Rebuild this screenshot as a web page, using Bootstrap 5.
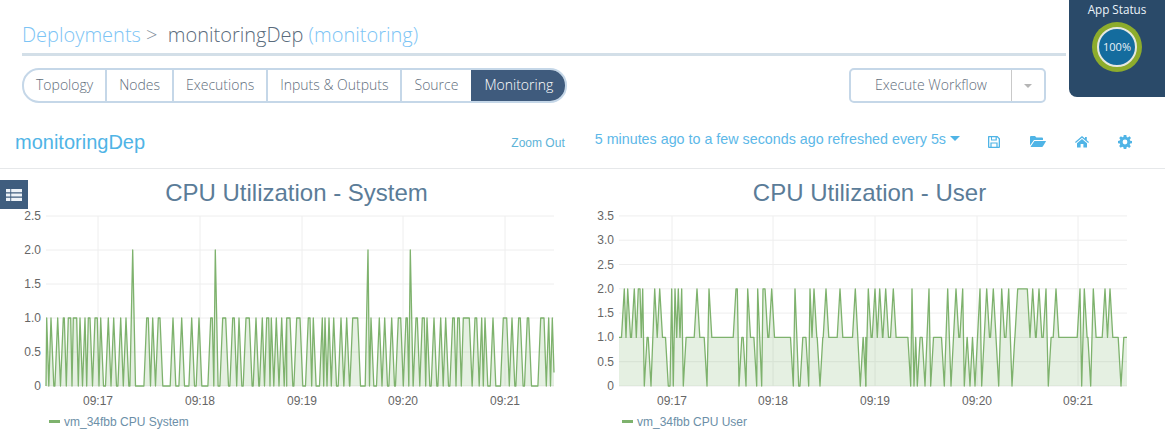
<!DOCTYPE html>
<html lang="en">
<head>
    <meta charset="UTF-8">
    <meta name="viewport" content="width=device-width, initial-scale=1.0">
    <title>monitoringDep</title>
    <link rel="stylesheet" href="https://cdn.jsdelivr.net/npm/bootstrap@5.3.0/dist/css/bootstrap.min.css">
    <style>
        body {
            background: #fff;
            font-family: "Open Sans", "Liberation Sans", sans-serif;
            font-weight: 300;
            height: 436px;
            overflow: hidden;
            position: relative;
        }
        .page-head {
            margin: 0 99px 0 22px;
            height: 56px;
            padding-top: 20px;
            border-bottom: 3px solid #d3dfe8;
            font-size: 20px;
            line-height: 30px;
            color: #7cc4f5;
            white-space: nowrap;
        }
        .page-head .sep { color: #7c8a98; margin-right: 5px; }
        .page-head .dep-name { color: #5a6b7c; }
        .tab-bar {
            margin: 12px 119px 0 22px;
            height: 35px;
        }
        .tab-group {
            border: 2px solid #c5d7e8;
            border-radius: 17px;
            overflow: hidden;
            height: 35px;
        }
        .tab-item {
            font-size: 14px;
            line-height: 29px;
            padding: 0 12px;
            color: #5f6e7c;
            border-left: 2px solid #c5d7e8;
        }
        .tab-item:first-child { border-left: 0; }
        .tab-item.on { background: #3f5b7d; color: #fff; border-left: 0; padding: 0 12px 0 13px; }
        .tab-item.wide { padding: 0 11px 0 12px; }
        .tab-item.tail { padding: 0 13px; }
        .exec-group {
            width: 197px;
            height: 35px;
            border: 2px solid #c5d7e8;
            border-radius: 5px;
            font-size: 14px;
            color: #5f6e7c;
        }
        .exec-main { width: 161px; line-height: 29px; height: 31px; text-align: center; border-right: 1px solid #c9c9c9; }
        .exec-caret {
            border-top: 4px solid #b5b5b5;
            border-left: 4px solid transparent;
            border-right: 4px solid transparent;
        }
        .status-box {
            position: absolute;
            top: 0;
            right: 0;
            width: 96px;
            height: 97px;
            background: #2a4a69;
            border-bottom-left-radius: 8px;
            color: #eaf3fa;
            font-size: 11.7px;
            font-weight: 400;
            text-align: center;
            line-height: 18px;
        }
        .status-ring {
            width: 50px;
            height: 50px;
            margin: 4px auto 0;
            border-radius: 50%;
            background: #8dac2c;
            padding: 5px;
        }
        .status-core {
            width: 40px;
            height: 40px;
            border-radius: 50%;
            background: #146c9e;
            border: 2px solid #e6e8e0;
            line-height: 36px;
            font-size: 11px;
            color: #e8f2f8;
        }
        .dash-bar {
            height: 66px;
            padding: 14px 0 0 15px;
            border-bottom: 1px solid #e6e8ea;
            font-family: "Liberation Sans", Arial, sans-serif;
            font-weight: 400;
            color: #4fb4e6;
        }
        .dash-title { font-size: 20px; margin-bottom: 2px; }
        .zoom-out { font-size: 12px; color: #5db3d8; margin: 0 1px 0 auto; }
        .time-range { font-size: 14.3px; margin: 0 0 6px 29px; color: #5cb8e8; white-space: nowrap; }
        .time-caret {
            display: inline-block;
            margin-left: 4px;
            vertical-align: 3px;
            border-top: 5px solid #4fb4e6;
            border-left: 5px solid transparent;
            border-right: 5px solid transparent;
        }
        .dash-icons { gap: 29px; margin: 0 33px 2px 27px; }
        .dash-icons svg { display: block; fill: #4fb4e6; }
        .side-toggle {
            position: absolute;
            top: 180px;
            left: 0;
            width: 28px;
            height: 29px;
            background: #3f5d7e;
        }
        .side-toggle svg { fill: #eef3f8; }
        .panel-wrap { padding-left: 10px; font-family: "Liberation Sans", Arial, sans-serif; font-weight: 400; }
        .chart-pane { width: 573px; }
        .chart-title {
            font-size: 24px;
            line-height: 30px;
            margin: 0;
            padding-top: 9px;
            color: #5b7c98;
            text-align: center;
            font-weight: 400;
        }
        .chart-pane svg { display: block; }
        .chart-pane text { font-size: 12px; fill: #666; font-family: "Liberation Sans", Arial, sans-serif; }
        .grid-line { stroke: #eee; stroke-width: 1; }
        .legend-line {
            font-size: 12px;
            line-height: 16px;
            margin-top: 4px;
            padding-left: 39px;
            color: #6c8fa8;
        }
        .legend-swatch { display: inline-block; width: 11px; height: 3px; background: #7eb26d; margin-right: 4px; vertical-align: 3px; }
    </style>
</head>
<body>
    <div class="page-head">
        <span>Deployments</span> <span class="sep">&gt;</span> <span class="dep-name">monitoringDep</span> <span>(monitoring)</span>
    </div>

    <div class="tab-bar d-flex justify-content-between">
        <div class="tab-group d-flex">
            <div class="tab-item">Topology</div>
            <div class="tab-item">Nodes</div>
            <div class="tab-item">Executions</div>
            <div class="tab-item wide">Inputs &amp; Outputs</div>
            <div class="tab-item tail">Source</div>
            <div class="tab-item on">Monitoring</div>
        </div>
        <div class="exec-group d-flex align-items-center">
            <div class="exec-main">Execute Workflow</div>
            <div class="flex-grow-1 d-flex justify-content-center"><span class="exec-caret"></span></div>
        </div>
    </div>

    <div class="status-box">
        App Status
        <div class="status-ring"><div class="status-core">100%</div></div>
    </div>

    <div class="dash-bar d-flex align-items-center">
        <div class="dash-title">monitoringDep</div>
        <div class="zoom-out">Zoom Out</div>
        <div class="time-range">5 minutes ago to a few seconds ago refreshed every 5s<span class="time-caret"></span></div>
        <div class="dash-icons d-flex align-items-center">
            <svg width="14" height="14" viewBox="0 0 14 14"><path fill-rule="evenodd" d="M1.5 1H10.5L13 3.5V12a1 1 0 0 1-1 1H2a1 1 0 0 1-1-1V1.5ZM2.3 2.3V11.7H3.4V7.4H10.6V11.7H11.7V4L10 2.3H9.8V5.4H4V2.3ZM5 2.3V4.6H8.6V2.3ZM4.6 8.6V11.7H9.4V8.6Z"/></svg>
            <svg width="16" height="13" viewBox="0 0 16 13"><path d="M0 2a1 1 0 0 1 1-1H5L6.4 2.5H12a1 1 0 0 1 1 1V5H4L0 10.5Z"/><path d="M4.4 6H15.6a.4.4 0 0 1 .3.6L12.8 11.5a1 1 0 0 1-.8.5H1a.4.4 0 0 1-.3-.6Z"/></svg>
            <svg width="14" height="13" viewBox="0 0 14 13"><path d="M7 1 10 3.6V2H11.8V5.2L14 7.1 13.2 8 7 2.8.8 8 0 7.1Z"/><path d="M7 4 12 8.2V12.4H8.4V9H5.6V12.4H2V8.2Z"/></svg>
            <svg width="14" height="14" viewBox="0 0 14 14"><path fill-rule="evenodd" d="M5.7 0H8.3L8.7 1.9 9.9 2.4 11.5 1.3 13 3 11.7 4.5 12.2 5.7 14 6V8.2L12.2 8.5 11.7 9.7 12.8 11.2 11.2 12.9 9.7 11.8 8.6 12.2 8.3 14H5.7L5.4 12.2 4.2 11.7 2.7 12.8 1.1 11.1 2.2 9.7 1.8 8.5 0 8.2V5.9L1.8 5.6 2.3 4.4 1.2 2.9 2.9 1.2 4.3 2.3 5.4 1.9ZM7 4.6A2.4 2.4 0 1 0 7 9.4 2.4 2.4 0 1 0 7 4.6Z"/></svg>
        </div>
    </div>

    <div class="side-toggle d-flex align-items-center justify-content-center">
        <svg width="16" height="12" viewBox="0 0 16 12"><path d="M0 0H4.3V3.2H0ZM5.2 0H16V3.2H5.2ZM0 4.4H4.3V7.6H0ZM5.2 4.4H16V7.6H5.2ZM0 8.8H4.3V12H0ZM5.2 8.8H16V12H5.2Z"/></svg>
    </div>

    <div class="panel-wrap d-flex">
        <div class="chart-pane">
            <h2 class="chart-title">CPU Utilization - System</h2>
            <svg id="chartSystem" width="573" height="202" viewBox="10 208 573 202"></svg>
            <div class="legend-line"><span class="legend-swatch"></span>vm_34fbb CPU System</div>
        </div>
        <div class="chart-pane">
            <h2 class="chart-title">CPU Utilization - User</h2>
            <svg id="chartUser" width="573" height="202" viewBox="583 208 573 202"></svg>
            <div class="legend-line"><span class="legend-swatch"></span>vm_34fbb CPU User</div>
        </div>
    </div>

    <script src="https://cdn.jsdelivr.net/npm/bootstrap@5.3.0/dist/js/bootstrap.bundle.min.js"></script>
    <script>
        // excursions read off the graph: [from, to, value], in 1/3 px, number alone = spike to 1
        const sysA = [[140,140],153,173,[190,193],[205,212],[220,230],240,255,[265,270],[285,292],302,325,341,362,378,[398,398,2],
            [440,445],458,[475,480],519,545,575,597,[632,637],[646,646,2],[668,677],[698,703],717,[738,748],768,787,[800,806],814,829,845,860];
        const sysB = [[-10,0],[20,30],[55,60],70,97,105,117,131,153,170,[188,203],[234,234,2],243,268,284,305,[325,332],[348,352],[361,361,2],
            [378,382],[397,403],411,432,452,467,[488,493],[503,508],[520,538],[555,560],575,585,609,[640,650],666,[686,691],[712,716],[752,762],776,787];
        const userA = [[133,133,2],[143,143,2],[163,163,2],[175,180,2],[188,188,2],[193,193,0],[213,213,0],[224,224,2],[239,239,2],[265,270,0],[275,275,2],[280,280,0],
            [285,285,2],[295,295,2],[305,305,2],[310,310,0],[351,351,2],[381,381,0],[387,387,2],[468,472,2],[477,477,0],[498,498,0],[503,503,2],[530,530,0],[533,533,2],
            [545,545,0],[549,555,2],[575,575,2],[640,640,0],[645,645,2],[656,660,0],[686,686,0],[690,690,2],[702,702,2],[720,720,0],[738,738,2],[780,780,2],[826,826,2],[841,841,0],[858,858,0]];
        const userB = [[2,2,0],[10,10,2],[30,30,2],[44,44,2],[62,62,2],[85,85,2],[137,137,0],[141,141,2],[147,147,0],[157,157,0],[180,180,0],[192,192,2],[197,197,0],[238,238,0],[248,248,2],[258,258,0],
            [273,273,2],[293,293,2],[298,298,0],[315,315,0],[330,330,0],[345,345,2],[350,350,0],[365,365,2],[385,385,2],[401,401,0],[410,410,2],[431,431,2],[441,441,0],[458,487,2],[503,503,2],[522,522,2],
            [543,543,2],[550,550,0],[573,573,2],[645,645,2],[650,650,0],[658,658,2],[677,677,0],[685,685,2],[720,720,2],[735,735,2],[768,768,0]];

        function toPx(list, offset) {
            return list.map(function (e) {
                const s = Array.isArray(e) ? e : [e, e, 1];
                return [offset + s[0] / 3, offset + s[1] / 3, s[2] === undefined ? 1 : s[2]];
            });
        }

        function buildLine(segs, base, x0, x1, endVal) {
            const ramp = 2.8;
            const pts = [[x0, base]];
            segs.forEach(function (s, i) {
                if (i === 0 && s[0] - ramp > x0) pts.push([s[0] - ramp, base]);
                pts.push([s[0], s[2]]);
                if (s[1] !== s[0]) pts.push([s[1], s[2]]);
                const next = segs[i + 1];
                if (!next) {
                    pts.push([s[1] + ramp, base]);
                    return;
                }
                const gap = next[0] - s[1];
                const sameSide = (s[2] - base) * (next[2] - base) > 0;
                if (gap >= ramp * 2) {
                    pts.push([s[1] + ramp, base], [next[0] - ramp, base]);
                } else if (sameSide) {
                    pts.push([s[1] + gap / 2, base]);
                }
            });
            const inside = pts.filter(function (p) { return p[0] >= x0 && p[0] < x1; });
            inside.push([x1, endVal]);
            return inside;
        }

        function drawChart(id, c) {
            const y = function (v) { return c.y0 - v * c.unit; };
            let out = "";
            c.ticks.forEach(function (t) {
                out += '<line class="grid-line" x1="' + c.x0 + '" x2="' + c.x1 + '" y1="' + y(t) + '" y2="' + y(t) + '"/>';
                out += '<text x="' + (c.x0 - 5) + '" y="' + (y(t) + 4) + '" text-anchor="end">' + (t === 0 ? "0" : t.toFixed(1)) + '</text>';
            });
            c.times.forEach(function (m) {
                out += '<line class="grid-line" x1="' + m[0] + '" x2="' + m[0] + '" y1="216" y2="' + c.y0 + '"/>';
                out += '<text x="' + m[0] + '" y="' + (c.y0 + 19) + '" text-anchor="middle">' + m[1] + '</text>';
            });
            const line = c.pts.map(function (p) { return p[0].toFixed(1) + "," + y(p[1]).toFixed(1); }).join(" ");
            out += '<polygon points="' + c.x0 + ',' + c.y0 + ' ' + line + ' ' + c.x1 + ',' + c.y0 + '" fill="#7eb26d" fill-opacity=".2"/>';
            out += '<polyline points="' + line + '" fill="none" stroke="#7eb26d" stroke-width="1.3" stroke-linejoin="round"/>';
            document.getElementById(id).innerHTML = out;
        }

        drawChart("chartSystem", {
            x0: 46, x1: 554, y0: 386, unit: 68,
            ticks: [0, 0.5, 1, 1.5, 2, 2.5],
            times: [[98, "09:17"], [200, "09:18"], [302, "09:19"], [403, "09:20"], [505, "09:21"]],
            pts: buildLine(toPx(sysA, 0).concat(toPx(sysB, 290)), 0, 46, 554, 0.2)
        });
        drawChart("chartUser", {
            x0: 619, x1: 1127, y0: 386, unit: 48.6,
            ticks: [0, 0.5, 1, 1.5, 2, 2.5, 3, 3.5],
            times: [[672, "09:17"], [773, "09:18"], [875, "09:19"], [977, "09:20"], [1078, "09:21"]],
            pts: buildLine(toPx(userA, 580).concat(toPx(userB, 865)), 1, 619, 1127, 1)
        });
    </script>
</body>
</html>
